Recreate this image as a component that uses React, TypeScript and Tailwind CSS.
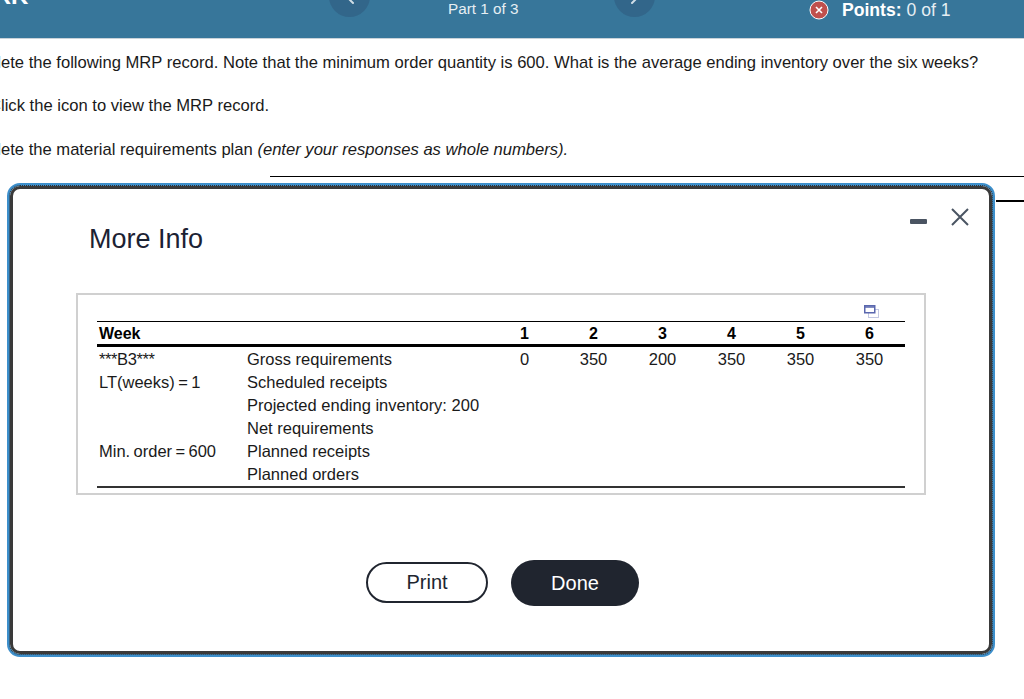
import { ChevronLeft, ChevronRight } from "lucide-react";

const weeks = [
  { week: "1", gross: "0" },
  { week: "2", gross: "350" },
  { week: "3", gross: "200" },
  { week: "4", gross: "350" },
  { week: "5", gross: "350" },
  { week: "6", gross: "350" },
];

const rows = [
  { left: "LT(weeks) = 1", label: "Scheduled receipts" },
  { left: "", label: "Projected ending inventory: 200" },
  { left: "", label: "Net requirements" },
  { left: "Min. order = 600", label: "Planned receipts" },
  { left: "", label: "Planned orders" },
];

const Header = () => (
  <div className="flex h-[39px] items-start overflow-hidden border-b border-[#c9d2d9] bg-[#37769a] text-white">
    <div className="-mt-[16px] -ml-[25px] w-[354px] text-[24px] leading-[24px] font-bold">ORK</div>
    <div className="-mt-[24px] flex h-[41px] w-[41px] items-center justify-center rounded-full bg-[#32668a]">
      <ChevronLeft className="h-[24px] w-[24px] text-[#cfdde6]" strokeWidth={2} />
    </div>
    <div className="ml-[78px] w-[166px] text-[15.3px] leading-[17px] text-[#e6eef3]">Part 1 of 3</div>
    <div className="-mt-[24px] flex h-[41px] w-[41px] items-center justify-center rounded-full bg-[#32668a]">
      <ChevronRight className="h-[24px] w-[24px] text-[#cfdde6]" strokeWidth={2} />
    </div>
    <div className="ml-[154px] flex h-[20px] items-center">
      <svg viewBox="0 0 20 20" className="h-[20px] w-[20px]">
        <circle cx="10" cy="10" r="9" fill="#c0504d" stroke="#ffffff" strokeWidth="1" />
        <path d="M7 7l6 6M13 7l-6 6" stroke="#ffffff" strokeWidth="1.6" fill="none" />
      </svg>
      <span className="ml-[13px] text-[17.6px] leading-[20px] text-[#e6eef3]">
        <b className="font-bold text-white">Points:</b> 0 of 1
      </span>
    </div>
  </div>
);

const WindowIcon = () => (
  <svg viewBox="0 0 15 13" className="h-[13px] w-[15px]" fill="none">
    <rect x="4.5" y="4.5" width="10" height="8" stroke="#c3c8e2" strokeWidth="1" />
    <rect x="0.75" y="0.75" width="10" height="7" fill="#ffffff" stroke="#5a67ae" strokeWidth="1.5" />
    <path d="M1 2h10" stroke="#5a67ae" strokeWidth="1.5" />
  </svg>
);

const RecordTable = () => (
  <div className="mt-[39px] ml-[63px] h-[202px] w-[850px] border-2 border-[#d0d0d0] px-[19px] pt-[10px] text-[16.5px] leading-[23px] text-[#1a1a1a]">
    <div className="flex h-[16px] justify-end pr-[26px]">
      <WindowIcon />
    </div>
    <div className="grid h-[26px] grid-cols-[150px_243px_repeat(6,69px)] items-center border-t border-b-[3px] border-t-black border-b-black pb-[1px] text-[16px] font-bold text-black">
      <div className="pl-[2px]">Week</div>
      <div />
      {weeks.map((w) => (
        <div key={w.week} className="text-center">
          {w.week}
        </div>
      ))}
    </div>
    <div className="grid grid-cols-[150px_243px_repeat(6,69px)] pt-[1px]">
      <div className="pl-[2px] tracking-[-0.4px]">***B3***</div>
      <div>Gross requirements</div>
      {weeks.map((w) => (
        <div key={w.week} className="text-center">
          {w.gross}
        </div>
      ))}
    </div>
    {rows.map((r) => (
      <div key={r.label} className="grid grid-cols-[150px_657px]">
        <div className="pl-[2px] [word-spacing:-1.2px]">{r.left}</div>
        <div>{r.label}</div>
      </div>
    ))}
    <div className="border-t-2 border-[#333333]" />
  </div>
);

const Modal = () => (
  <div className="absolute top-[183px] left-[7px] h-[474px] w-[988px] rounded-[13px] border-[3px] border-[#3d8fcb] bg-white">
    <div className="h-full rounded-[10px] border-[3px] border-[#3a3a3a] outline-1 outline-[#333333] outline-dotted">
      <div className="flex h-[65px] items-start justify-between pt-[17px] pr-[20px] pl-[76px]">
        <h2 className="pt-[17px] text-[27px] leading-[32px] text-[#1c2233]">More Info</h2>
        <div className="flex items-start gap-[24px] pt-[2px]">
          <div className="mt-[11px] h-[5px] w-[17px] rounded-[1px] bg-[#4a5462]" />
          <svg viewBox="0 0 18 18" className="h-[18px] w-[18px]" fill="none">
            <path d="M1 1l16 16M17 1L1 17" stroke="#4a5462" strokeWidth="2" />
          </svg>
        </div>
      </div>
      <RecordTable />
      <div className="mt-[65px] flex items-center pl-[353px] text-[20px]">
        <button className="mb-[2px] h-[41px] w-[122px] rounded-full border-2 border-[#20252f] text-[#20252f]">Print</button>
        <button className="ml-[23px] h-[46px] w-[128px] rounded-full bg-[#20252f] text-white">Done</button>
      </div>
    </div>
  </div>
);

const App = () => {
  return (
    <div className="relative h-[699px] w-[1024px] overflow-hidden bg-white font-['Liberation_Sans',Arial,sans-serif] text-black">
      <Header />
      <div className="text-[16.6px] leading-[20px] text-[#1a1a1a]">
        <p className="mt-[14px] -ml-[47px] whitespace-nowrap">
          Complete the following MRP record. Note that the minimum order quantity is 600. What is the average ending
          inventory over the six weeks?
        </p>
        <p className="mt-[23px] -ml-[11px]">Click the icon to view the MRP record.</p>
        <p className="mt-[24px] -ml-[47px]">
          Complete the material requirements plan <i>(enter your responses as whole numbers).</i>
        </p>
      </div>
      <div className="mt-[16px] ml-[270px] border-t border-black" />
      <div className="mt-[23px] ml-[996px] border-t-2 border-black" />
      <Modal />
    </div>
  );
};

export default App;
